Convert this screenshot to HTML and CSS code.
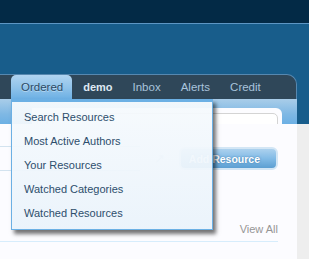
FILE: index.html
```html
<!DOCTYPE html>
<html lang="en">
<head>
  <meta charset="UTF-8" />
  <title>Resources</title>
  <link rel="stylesheet" href="styles.css">
</head>
<body>

  <div class="top-band">
    <div class="top-bar"></div>
    <div class="logo-area"></div>

    <div class="page">
      <nav class="nav-tabs">
        <a href="#" class="tab selected">Ordered</a>
        <a href="#" class="tab visitor">demo</a>
        <a href="#" class="tab">Inbox</a>
        <a href="#" class="tab">Alerts</a>
        <a href="#" class="tab">Credit</a>
      </nav>
      <div class="tab-links"></div>

      <div class="quick-search">
        <div class="search-input">
          <svg width="10" height="10" viewBox="0 0 10 10"><circle cx="4" cy="4" r="3" fill="none" stroke="#c8c8c8" stroke-width="1.4"/><path d="M6.2 6.2L9 9" stroke="#c8c8c8" stroke-width="1.6"/></svg>
        </div>
      </div>

      <ul class="menu">
        <li><a href="#">Search Resources</a></li>
        <li><a href="#">Most Active Authors</a></li>
        <li><a href="#">Your Resources</a></li>
        <li><a href="#">Watched Categories</a></li>
        <li><a href="#">Watched Resources</a></li>
      </ul>
    </div>
  </div>

  <main class="page content">
    <div class="title-bar">
      <div class="crumbs"></div>
      <span class="ctrl-icon">&#8599;</span>
      <a href="#" class="call-to-action">Add Resource</a>
    </div>
    <div class="section-head">
      <a href="#" class="view-all">View All</a>
    </div>
  </main>

</body>
</html>
```

FILE: styles.css
```css
body {
  margin: 0;
  background: #eeeeee;
  font-family: "Liberation Sans", Arial, sans-serif;
  font-size: 11px;
  overflow: hidden;
}
a {
  text-decoration: none;
}

.top-band {
  background: #185d8b;
}
.top-bar {
  height: 23px;
  background: #032a46;
  border-bottom: 1px solid #5d96c4;
}
.logo-area {
  height: 50px;
}

.page {
  width: 297px;
  position: relative;
}

.nav-tabs {
  display: flex;
  height: 25px;
  padding-left: 11px;
  background: #2f4759;
  border-top: 1px solid #5688b0;
  border-right: 1px solid #5688b0;
  border-top-right-radius: 10px;
  box-sizing: border-box;
  width: 297px;
}
.tab {
  display: flex;
  align-items: center;
  padding: 0 10px 1px 10px;
  font-size: 11.5px;
  color: #a9c4dc;
}
.tab.selected {
  color: #2b4a66;
  background: linear-gradient(#b0d4f0, #8ec2ea 55%, #6cb0e4);
  border-radius: 5px 5px 0 0;
  padding-right: 9px;
  text-shadow: 0 1px 0 rgba(255,255,255,0.4);
}
.tab.visitor {
  color: #dfe9f3;
  font-weight: bold;
  font-size: 11px;
  padding-left: 11px;
}

.tab-links {
  height: 25px;
  background: linear-gradient(#a9cde9, #7fb8e4 60%, #6cb0e4);
}

.quick-search {
  position: absolute;
  top: 34px;
  left: 32px;
  width: 250px;
  height: 40px;
  padding: 5px 4px 0 5px;
  box-sizing: border-box;
  background: #fcfcff;
  border-top-right-radius: 6px;
}
.search-input {
  height: 22px;
  border: 1px solid #d4d4d4;
  border-radius: 5px;
  background: #fff;
  box-sizing: border-box;
  padding: 5px 0 0 8px;
}

.menu {
  position: absolute;
  top: 25px;
  left: 11px;
  width: 202px;
  margin: 0;
  padding: 3px 0 4px 0;
  list-style: none;
  box-sizing: border-box;
  background: linear-gradient(rgba(246,250,253,0.94), rgba(234,243,251,0.94));
  border: 1px solid #6cb0e4;
  border-top-width: 3px;
  box-shadow: 3px 4px 4px rgba(0,0,0,0.55);
  z-index: 2;
}
.menu li {
  height: 24px;
  display: flex;
  align-items: center;
  padding-left: 12px;
}
.menu a {
  color: #2d4e6c;
}

.content {
  background: #fcfcff;
  height: 140px;
  padding: 22px 19px 0 0;
  box-sizing: border-box;
}
.title-bar {
  display: flex;
  align-items: center;
  gap: 14px;
  height: 25px;
}
.crumbs {
  flex: 1;
  align-self: stretch;
  border-top: 1px solid #d3e3ef;
  border-bottom: 1px solid #d3e3ef;
}
.ctrl-icon {
  color: #c8d8e6;
  font-size: 13px;
}
.call-to-action {
  height: 23px;
  display: flex;
  align-items: center;
  padding: 0 16px 0 8px;
  box-sizing: border-box;
  border-radius: 6px;
  border: 2px solid #d3e6f5;
  background: linear-gradient(#acd1ee, #82bbe6 50%, #5c9fd2);
  color: #fff;
  font-weight: bold;
  font-size: 10.5px;
  text-shadow: 0 0 2px #3a77a8;
}

.section-head {
  margin-top: 52px;
  display: flex;
  justify-content: flex-end;
  height: 18px;
  border-bottom: 1px solid #d7edfc;
}
.view-all {
  color: #969696;
  font-size: 11px;
}
```
